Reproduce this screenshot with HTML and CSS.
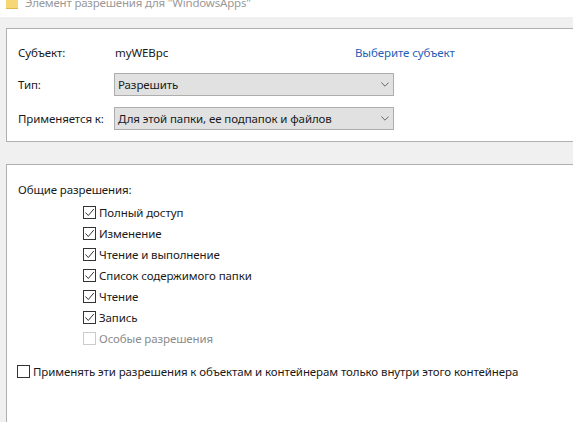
FILE: index.html
```html
<!DOCTYPE html>
<html>
<head>
    <title>Элемент разрешения</title>
    <link rel="stylesheet" href="styles.css">
</head>
<body>
    <div class="titlebar">
        <svg class="folder" width="12" height="9" viewBox="0 0 12 9">
            <path d="M0 0H12V8H0Z" fill="#f6d675"/>
            <path d="M0 8.5H12" stroke="#e0b850" stroke-width="1"/>
        </svg>
        <span class="title">Элемент разрешения для "WindowsApps"</span>
    </div>

    <div class="content">
        <div class="panel top-panel">
            <div class="row subject-row">
                <span class="row-label">Субъект:</span>
                <span class="subject">myWEBpc</span>
                <a href="#" class="pick-link">Выберите субъект</a>
            </div>
            <div class="row type-row">
                <span class="row-label">Тип:</span>
                <div class="dropdown">
                    <span>Разрешить</span>
                    <svg width="8" height="5" viewBox="0 0 8 5"><path d="M0.3 0.5L4 4.2L7.7 0.5" fill="none" stroke="#666" stroke-width="1"/></svg>
                </div>
            </div>
            <div class="row applies-row">
                <span class="row-label">Применяется к:</span>
                <div class="dropdown">
                    <span>Для этой папки, ее подпапок и файлов</span>
                    <svg width="8" height="5" viewBox="0 0 8 5"><path d="M0.3 0.5L4 4.2L7.7 0.5" fill="none" stroke="#666" stroke-width="1"/></svg>
                </div>
            </div>
        </div>

        <div class="panel bottom-panel">
            <div class="group-title">Общие разрешения:</div>
            <ul class="perm-list">
                <li><span class="box"><svg width="11" height="11" viewBox="0 0 11 11"><path d="M1.5 5.5L4.3 8.5L9.8 2" fill="none" stroke="#333" stroke-width="1"/></svg></span>Полный доступ</li>
                <li><span class="box"><svg width="11" height="11" viewBox="0 0 11 11"><path d="M1.5 5.5L4.3 8.5L9.8 2" fill="none" stroke="#333" stroke-width="1"/></svg></span>Изменение</li>
                <li><span class="box"><svg width="11" height="11" viewBox="0 0 11 11"><path d="M1.5 5.5L4.3 8.5L9.8 2" fill="none" stroke="#333" stroke-width="1"/></svg></span>Чтение и выполнение</li>
                <li><span class="box"><svg width="11" height="11" viewBox="0 0 11 11"><path d="M1.5 5.5L4.3 8.5L9.8 2" fill="none" stroke="#333" stroke-width="1"/></svg></span>Список содержимого папки</li>
                <li><span class="box"><svg width="11" height="11" viewBox="0 0 11 11"><path d="M1.5 5.5L4.3 8.5L9.8 2" fill="none" stroke="#333" stroke-width="1"/></svg></span>Чтение</li>
                <li><span class="box"><svg width="11" height="11" viewBox="0 0 11 11"><path d="M1.5 5.5L4.3 8.5L9.8 2" fill="none" stroke="#333" stroke-width="1"/></svg></span>Запись</li>
                <li class="disabled"><span class="box"></span>Особые разрешения</li>
            </ul>
            <div class="only-inside"><span class="box"></span>Применять эти разрешения к объектам и контейнерам только внутри этого контейнера</div>
        </div>
    </div>
</body>
</html>
```

FILE: styles.css
```css
html, body {
    margin: 0;
    height: 100%;
}
body {
    width: 573px;
    height: 422px;
    overflow: hidden;
    background-color: #f0f0f0;
    font-family: "Noto Sans", "Open Sans", sans-serif;
    font-size: 11.5px;
    letter-spacing: -0.1px;
    color: #1a1a1a;
}
.titlebar {
    height: 17px;
    background-color: #fff;
    display: flex;
    align-items: flex-start;
    overflow: hidden;
    padding-left: 6px;
}
.folder {
    flex: none;
    margin-right: 7px;
}
.title {
    font-size: 11.5px;
    line-height: 17px;
    margin-top: -6px;
    letter-spacing: -0.2px;
    color: #999;
    white-space: nowrap;
}
.content {
    padding: 11px 0 0 6px;
}
.panel {
    background-color: #fff;
    border: 1px solid #b0b0b0;
    border-right: none;
    box-sizing: border-box;
}
.top-panel {
    height: 114px;
    padding: 13px 0 0 11px;
}
.bottom-panel {
    margin-top: 22px;
    height: 260px;
    padding: 16px 0 0 11px;
}
.row {
    display: flex;
    align-items: center;
}
.row-label {
    width: 96px;
    flex: none;
}
.subject-row {
    height: 21px;
    margin-bottom: 10px;
}
.subject {
    width: 241px;
    flex: none;
    padding-left: 1px;
    box-sizing: border-box;
}
.pick-link {
    color: #1f5fb4;
    text-decoration: none;
}
.type-row {
    margin-bottom: 11px;
}
.dropdown {
    width: 280px;
    height: 23px;
    box-sizing: border-box;
    background-color: #e1e1e1;
    border: 1px solid #adadad;
    padding: 0 4px 0 3px;
    display: flex;
    align-items: center;
    justify-content: space-between;
}
.group-title {
    line-height: 17px;
}
.perm-list {
    list-style: none;
    margin: 4px 0 0;
    padding: 0 0 0 65px;
}
.perm-list li {
    height: 21px;
    display: flex;
    align-items: center;
}
.box {
    width: 13px;
    height: 13px;
    box-sizing: border-box;
    border: 1px solid #333;
    background-color: #fff;
    margin-right: 3px;
    flex: none;
    display: flex;
}
.disabled {
    color: #8c8c8c;
}
.disabled .box {
    border-color: #ccc;
}
.only-inside {
    display: flex;
    align-items: center;
    height: 21px;
    margin: 12px 0 0 -1px;
    white-space: nowrap;
}
```
